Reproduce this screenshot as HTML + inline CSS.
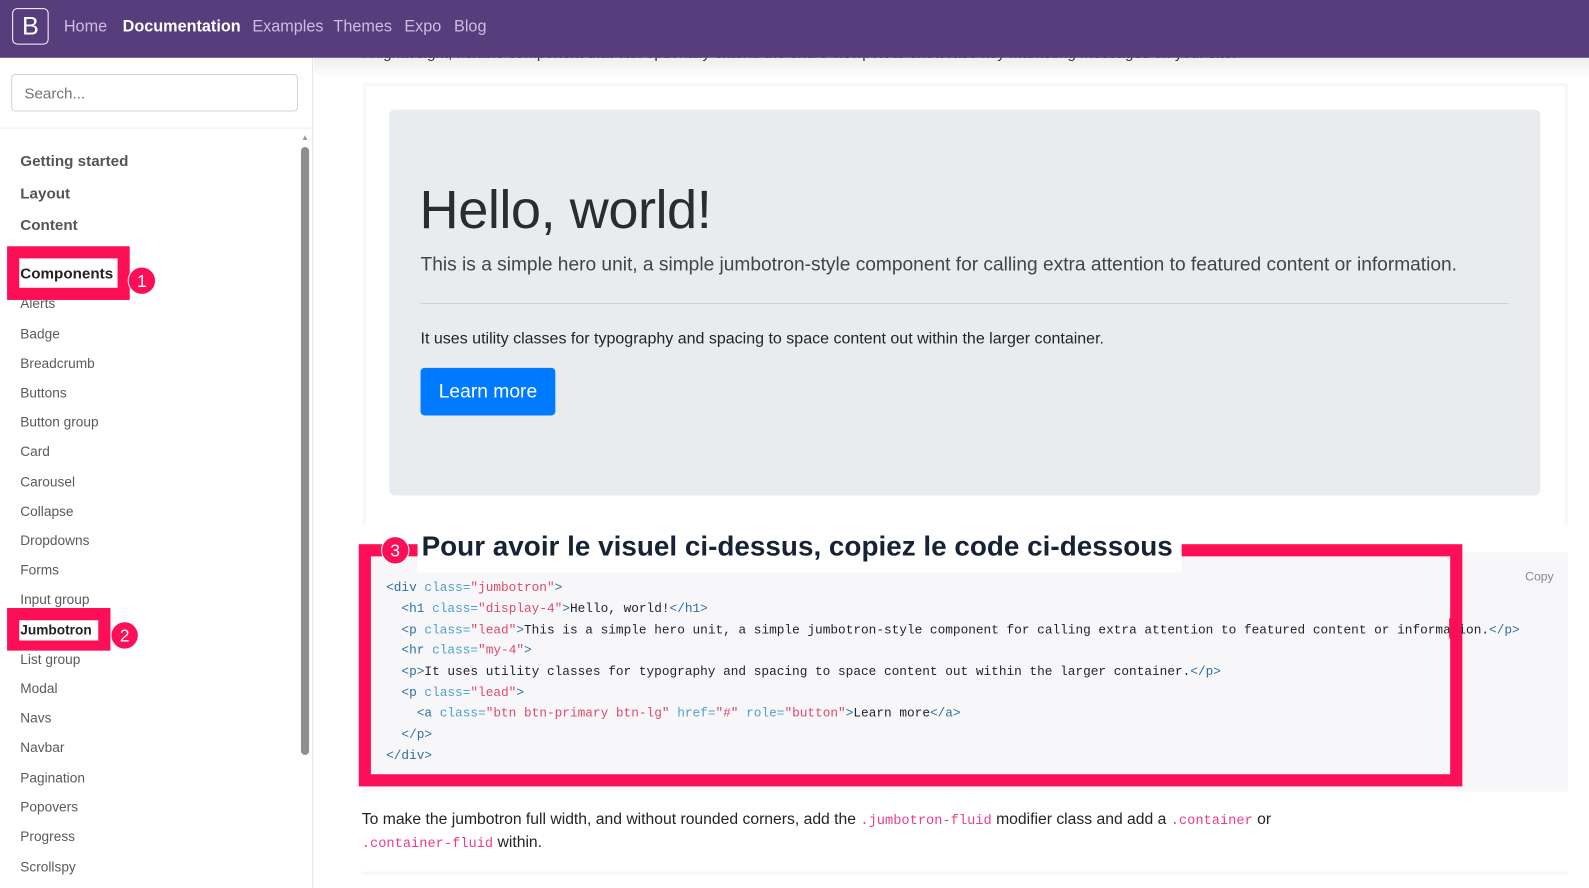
<!DOCTYPE html>
<html><head><meta charset="utf-8"><style>
*{margin:0;padding:0;box-sizing:border-box}
body{width:1589px;height:876px;overflow:hidden;background:#fff;font-family:"Liberation Sans",sans-serif;position:relative;color:#212529}
#w{position:absolute;left:0;top:0;width:1568px;height:865px;transform:scale(1.0134);transform-origin:0 0}
.a{position:absolute;white-space:nowrap}
.nav{left:0;top:0;width:1568px;height:57px;background:#563d7c;z-index:5}
.nav span{position:absolute;top:18px;font-size:16px;color:#cbbde2}
.side a{position:absolute;left:20px;font-size:13.5px;color:#5a5a5a}
.sec{position:absolute;left:20px;font-size:15px;font-weight:bold;color:#555}
.code{font-family:"Liberation Mono",monospace;font-size:12.6px;color:#212529}
.code div{position:absolute;left:381px;white-space:pre}
.t{color:#2f6f9f}.at{color:#4f9fcf}.s{color:#dd4a68}
.red{position:absolute;border:12px solid #fd0f58}
.badge{position:absolute;width:28px;height:28px;border-radius:50%;background:#fd0f58;color:#fff;font-size:17px;text-align:center;line-height:28px;border:1px solid #fff}
</style></head><body><div id="w">
<div class="a nav">
 <div style="position:absolute;left:12px;top:8px;width:36px;height:36px;border:1px solid #fff;border-radius:5px;color:#fff;font-size:25px;text-align:center;line-height:34px">B</div>
 <span style="left:63px">Home</span>
 <span style="left:121px;color:#fff;font-weight:bold">Documentation</span>
 <span style="left:249px">Examples</span>
 <span style="left:329px">Themes</span>
 <span style="left:399px">Expo</span>
 <span style="left:448px">Blog</span>
</div>
<div class="a" style="left:0;top:57px;width:309px;height:819px;border-right:1px solid #e5e5e5"></div>
<div class="a" style="left:11px;top:73px;width:283px;height:37px;border:1px solid #ced4da;border-radius:4px;font-size:15px;color:#6c757d;padding:10px 12px">Search...</div>
<div class="a" style="left:0;top:126px;width:309px;height:1px;background:#eee"></div>
<div class="a" style="left:297px;top:131px;font-size:8px;color:#999">▲</div>
<div class="a" style="left:297px;top:145px;width:8px;height:600px;background:#8e8e8e;border-radius:4px"></div>
<div class="side">
<span class="sec" style="top:151px">Getting started</span>
<span class="sec" style="top:183px">Layout</span>
<span class="sec" style="top:214px">Content</span>
<a style="top:292px">Alerts</a><a style="top:322px">Badge</a><a style="top:351px">Breadcrumb</a><a style="top:380px">Buttons</a><a style="top:409px">Button group</a><a style="top:438px">Card</a><a style="top:468px">Carousel</a><a style="top:497px">Collapse</a><a style="top:526px">Dropdowns</a><a style="top:555px">Forms</a><a style="top:584px">Input group</a><a style="top:643px">List group</a><a style="top:672px">Modal</a><a style="top:701px">Navs</a><a style="top:730px">Navbar</a><a style="top:760px">Pagination</a><a style="top:789px">Popovers</a><a style="top:818px">Progress</a><a style="top:848px">Scrollspy</a>
</div>
<div class="red" style="left:7px;top:243px;width:121px;height:53px;background:#fff"></div>
<div class="a" style="left:20px;top:262px;font-size:15px;font-weight:bold;color:#222">Components</div>
<div class="badge" style="left:126px;top:263px">1</div>
<div class="red" style="left:7px;top:600px;width:102px;height:42px;background:#fff;border-width:12px 12px 10px"></div>
<div class="a" style="left:20px;top:614px;font-size:13.5px;font-weight:bold;color:#222">Jumbotron</div>
<div class="badge" style="left:109px;top:613px">2</div>

<div class="a" style="left:310px;top:57px;width:1279px;height:20px;background:linear-gradient(#eee,#fff)"></div>
<div class="a" style="left:358px;top:44px;font-size:15px;color:#333">A lightweight, flexible component that can optionally extend the entire viewport to showcase key marketing messages on your site.</div>
<div class="a" style="left:358px;top:82px;width:1189px;height:436px;border:3px solid #f7f7f9;border-bottom:0"></div>
<div class="a" style="left:384px;top:108px;width:1136px;height:381px;background:#e9ecef;border-radius:6px"></div>
<div class="a" style="left:414px;top:177px;font-size:53.5px;color:#2a2d30;letter-spacing:-0.5px">Hello, world!</div>
<div class="a" style="left:415px;top:251px;font-size:18.9px;color:#444">This is a simple hero unit, a simple jumbotron-style component for calling extra attention to featured content or information.</div>
<div class="a" style="left:415px;top:299px;width:1074px;height:1px;background:#d0d3d6"></div>
<div class="a" style="left:415px;top:326px;font-size:15.8px;color:#212529">It uses utility classes for typography and spacing to space content out within the larger container.</div>
<div class="a" style="left:415px;top:363px;width:133px;height:47px;background:#007bff;border-radius:4px;color:#fff;font-size:19px;text-align:center;line-height:47px">Learn more</div>

<div class="a" style="left:358px;top:545px;width:1189px;height:236px;background:#f7f7f9"></div>
<div class="red" style="left:354px;top:537px;width:1089px;height:239px"></div>
<div class="a" style="left:412px;top:522px;width:754px;height:43px;background:#fff"></div>
<div class="a" style="left:416px;top:523px;font-size:27.5px;font-weight:bold;color:#182235">Pour avoir le visuel ci-dessus, copiez le code ci-dessous</div>
<div class="badge" style="left:376px;top:529px">3</div>
<div class="a" style="left:1505px;top:562px;font-size:12px;color:#888">Copy</div>
<div class="code">
<div style="top:573px"><span class="t">&lt;div</span> <span class="at">class=</span><span class="s">"jumbotron"</span><span class="t">&gt;</span></div>
<div style="top:594px">  <span class="t">&lt;h1</span> <span class="at">class=</span><span class="s">"display-4"</span><span class="t">&gt;</span>Hello, world!<span class="t">&lt;/h1&gt;</span></div>
<div style="top:615px">  <span class="t">&lt;p</span> <span class="at">class=</span><span class="s">"lead"</span><span class="t">&gt;</span>This is a simple hero unit, a simple jumbotron-style component for calling extra attention to featured content or information.<span class="t">&lt;/p&gt;</span></div>
<div style="top:635px">  <span class="t">&lt;hr</span> <span class="at">class=</span><span class="s">"my-4"</span><span class="t">&gt;</span></div>
<div style="top:656px">  <span class="t">&lt;p&gt;</span>It uses utility classes for typography and spacing to space content out within the larger container.<span class="t">&lt;/p&gt;</span></div>
<div style="top:677px">  <span class="t">&lt;p</span> <span class="at">class=</span><span class="s">"lead"</span><span class="t">&gt;</span></div>
<div style="top:697px">    <span class="t">&lt;a</span> <span class="at">class=</span><span class="s">"btn btn-primary btn-lg"</span> <span class="at">href=</span><span class="s">"#"</span> <span class="at">role=</span><span class="s">"button"</span><span class="t">&gt;</span>Learn more<span class="t">&lt;/a&gt;</span></div>
<div style="top:718px">  <span class="t">&lt;/p&gt;</span></div>
<div style="top:739px"><span class="t">&lt;/div&gt;</span></div>
</div>
<div class="a" style="left:1430px;top:610px;width:12px;height:20px;background:#fd0f58"></div>
<div class="a" style="left:357px;top:800px;font-size:15.5px;color:#212529">To make the jumbotron full width, and without rounded corners, add the <span style="font-family:'Liberation Mono',monospace;font-size:13.5px;color:#e83e8c">.jumbotron-fluid</span> modifier class and add a <span style="font-family:'Liberation Mono',monospace;font-size:13.5px;color:#e83e8c">.container</span> or</div>
<div class="a" style="left:357px;top:823px;font-size:15.5px;color:#212529"><span style="font-family:'Liberation Mono',monospace;font-size:13.5px;color:#e83e8c">.container-fluid</span> within.</div>
<div class="a" style="left:358px;top:860px;width:1189px;height:3px;background:#f7f7f9"></div>
</div></body></html>
